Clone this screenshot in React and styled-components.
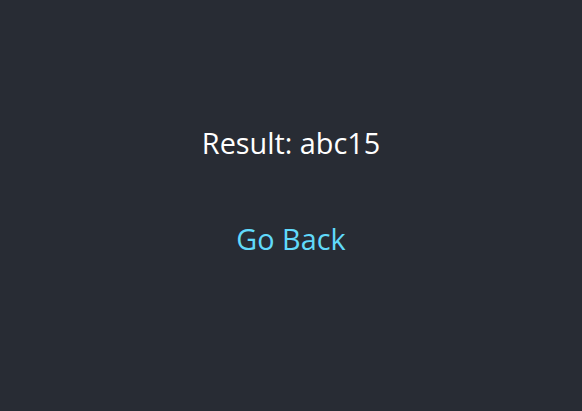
import React from "react";
import styled, { createGlobalStyle } from "styled-components";

const Global = createGlobalStyle`
  html, body { margin: 0; padding: 0; background: #282c34; }
  body { font-family: "Open Sans", "Noto Sans", sans-serif; }
`;

const Header = styled.main`
  min-height: 100vh;
  box-sizing: border-box;
  padding-bottom: 29px;
  display: flex;
  flex-direction: column;
  align-items: center;
  justify-content: center;
  gap: 56px;
  color: #ffffff;
  font-size: 28.8px;
`;

const Result = styled.p`
  margin: 0;
  line-height: 40px;
`;

const BackLink = styled.a`
  color: #61dafb;
  text-decoration: none;
  line-height: 40px;
  cursor: pointer;
`;

export default function App() {
  return (
    <>
      <Global />
      <Header>
        <Result>Result: abc15</Result>
        <BackLink href="#">Go Back</BackLink>
      </Header>
    </>
  );
}
